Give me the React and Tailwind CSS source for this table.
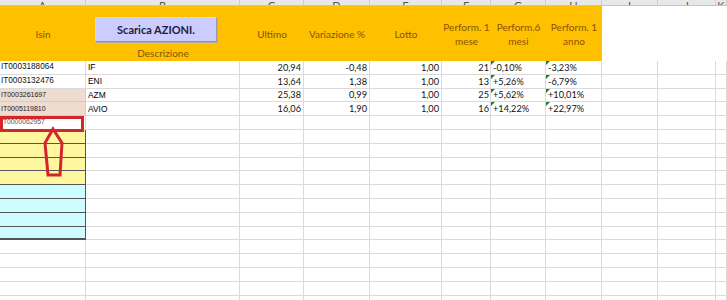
import React from "react";

const COLS =
  "grid grid-cols-[86px_154px_64px_66px_72px_49px_55px_56px_56px_58px_1fr]";

const letters = ["A", "B", "C", "D", "E", "F", "G", "H", "I", "J", "K"];

const rows = [
  { isin: "IT0003188064", name: "IF", ultimo: "20,94", vari: "-0,48", lotto: "1,00", p1: "21", p6: "-0,10%", py: "-3,23%" },
  { isin: "IT0003132476", name: "ENI", ultimo: "13,64", vari: "1,38", lotto: "1,00", p1: "13", p6: "+5,26%", py: "-6,79%" },
  { isin: "IT0003261697", name: "AZM", ultimo: "25,38", vari: "0,99", lotto: "1,00", p1: "25", p6: "+5,62%", py: "+10,01%" },
  { isin: "IT0005119810", name: "AVIO", ultimo: "16,06", vari: "1,90", lotto: "1,00", p1: "16", p6: "+14,22%", py: "+22,97%" },
  { isin: "IT0000062957" },
];

const cellA = (i) => {
  if (i === 2 || i === 3) return "bg-[#eddccf] border-r border-b border-[#dccbbd]";
  if (i >= 5 && i <= 8) return "bg-[#fff7a0] border-r border-b border-[#555]";
  if (i >= 9 && i <= 11) return "bg-[#cdfdff] border-r border-b border-[#555]";
  if (i === 12) return "bg-[#cdfdff] border-r border-b-2 border-[#555]";
  return "bg-white border-r border-b border-[#dadada]";
};

const isinText = (i) => {
  if (i < 2) return "text-[8.2px] text-[#111]";
  if (i < 4) return "text-[7px] text-[#222]";
  return "text-[6.8px] text-[#555]";
};

const Flag = () => (
  <span className="absolute left-0 top-0 w-0 h-0 border-t-[4px] border-r-[4px] border-t-[#207a36] border-r-transparent" />
);

const grid = "border-r border-b border-[#dadada] h-full";

const DataRow = ({ r, i }) => (
  <div className={`${COLS} h-[13.8px] text-[9.2px] leading-none text-[#111]`} style={{ fontFamily: "Lato, sans-serif" }}>
    <div
      className={`${cellA(i)} flex items-center overflow-hidden whitespace-nowrap pl-[1px]`}
      style={{ fontFamily: "'Liberation Sans', Arial, sans-serif" }}
    >
      <span className={isinText(i)}>{r ? r.isin : ""}</span>
    </div>
    <div
      className={`${grid} flex items-center pl-[2px] text-[8.4px] text-[#000]`}
      style={{ fontFamily: "'Liberation Sans', Arial, sans-serif" }}
    >
      {r?.name}
    </div>
    <div className={`${grid} flex items-center justify-end pr-[2px]`}>{r?.ultimo}</div>
    <div className={`${grid} flex items-center justify-end pr-[2px]`}>{r?.vari}</div>
    <div className={`${grid} flex items-center justify-end pr-[2px]`}>{r?.lotto}</div>
    <div className={`${grid} flex items-center justify-end pr-[1px]`}>{r?.p1}</div>
    <div className={`${grid} relative flex items-center pl-[2px]`}>
      {r?.p6 && <Flag />}
      {r?.p6}
    </div>
    <div className={`${grid} relative flex items-center pl-[2px]`}>
      {r?.py && <Flag />}
      {r?.py}
    </div>
    <div className={grid} />
    <div className={grid} />
    <div className={grid} />
  </div>
);

export default function App() {
  const list = Array.from({ length: 18 }, (_, i) => rows[i]);
  return (
    <div className="relative w-[727px] h-[300px] overflow-hidden bg-white" style={{ fontFamily: "Lato, sans-serif" }}>
      {/* column letters strip */}
      <div className={`${COLS} h-[6px] bg-[#e8e8e8] border-b border-[#c4c4c4]`}>
        {letters.map((l) => (
          <div key={l} className="flex items-end justify-center overflow-hidden border-r border-[#cfcfcf]">
            <span className="text-[11px] leading-none text-[#555] mb-[-6px]">{l}</span>
          </div>
        ))}
      </div>

      {/* header block */}
      <div className={`${COLS} h-[55px] text-[10px] leading-[14px] text-[#875500]`}>
        <div className="bg-[#ffc000] flex items-center justify-center">Isin</div>
        <div className="bg-[#ffc000] flex flex-col">
          <button className="mt-[11px] ml-[9px] w-[122px] h-[25px] bg-[#ccccff] border border-[#d9d9e8] border-r-[#9a9ab0] border-b-[#8e8ea6] shadow-[1px_1px_0_#b0b0b0] text-[11px] font-bold text-[#1c1c3c]">
            Scarica AZIONI.
          </button>
          <div className="mt-auto text-center pb-[1px] leading-[13px]">Descrizione</div>
        </div>
        <div className="bg-[#ffc000] flex items-center justify-center">Ultimo</div>
        <div className="bg-[#ffc000] flex items-center justify-center whitespace-nowrap">Variazione %</div>
        <div className="bg-[#ffc000] flex items-center justify-center">Lotto</div>
        <div className="bg-[#ffc000] flex items-center justify-center text-center whitespace-nowrap">
          <span>Perform. 1<br />mese</span>
        </div>
        <div className="bg-[#ffc000] flex items-center justify-center text-center whitespace-nowrap">
          <span>Perform.6<br />mesi</span>
        </div>
        <div className="bg-[#ffc000] flex items-center justify-center text-center whitespace-nowrap">
          <span>Perform. 1<br />anno</span>
        </div>
        <div className="bg-white" />
        <div className="bg-white" />
        <div className="bg-white" />
      </div>

      {list.map((r, i) => (
        <DataRow key={i} r={r} i={i} />
      ))}

      {/* red highlight box */}
      <div className="absolute left-0 top-[116px] w-[84px] h-[16px] border-[3px] border-[#d3262c]" />

      {/* red arrow */}
      <svg className="absolute left-0 top-0" width="100" height="200" viewBox="0 0 100 200">
        <polygon
          points="53,129 62,143 60,175 48,175 45,143"
          fill="none"
          stroke="#d3262c"
          strokeWidth="3"
          strokeLinejoin="miter"
        />
      </svg>
    </div>
  );
}
